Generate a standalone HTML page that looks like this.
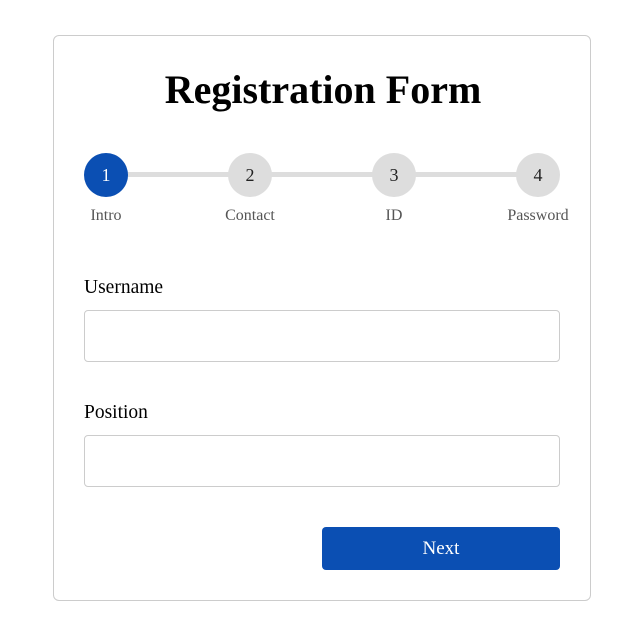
<!DOCTYPE html>
<html><head><style>
body{margin:0;background:#fff;font-family:"Liberation Serif",serif;}
.card{position:absolute;left:53px;top:35px;width:536px;height:564px;border:1px solid #ccc;border-radius:6px;}
h1{position:absolute;left:6px;width:634px;top:67px;margin:0;text-align:center;font-size:40px;font-weight:bold;line-height:46px;}
.line{position:absolute;left:106px;width:432px;top:172px;height:5px;background:#ddd;}
.c{position:absolute;top:153px;width:44px;height:44px;border-radius:50%;background:#ddd;text-align:center;line-height:44px;font-size:18px;color:#222;}
.l{position:absolute;top:207px;width:100px;text-align:center;font-size:16px;color:#555;}
.lab{position:absolute;left:84px;font-size:19.5px;}
.in{position:absolute;left:84px;width:474px;height:50px;border:1px solid #ccc;border-radius:4px;}
.btn{position:absolute;left:322px;top:527px;width:238px;height:43px;background:#0b4fb3;border-radius:4px;color:#fff;text-align:center;line-height:44px;font-size:19px;}
</style></head><body>
<div class="card"></div>
<h1>Registration Form</h1>
<div class="line"></div>
<div class="c" style="left:84px;background:#0b4fb3;color:#fff">1</div>
<div class="c" style="left:228px">2</div>
<div class="c" style="left:372px">3</div>
<div class="c" style="left:516px">4</div>
<div class="l" style="left:56px">Intro</div>
<div class="l" style="left:200px">Contact</div>
<div class="l" style="left:344px">ID</div>
<div class="l" style="left:488px">Password</div>
<div class="lab" style="top:277px">Username</div>
<div class="in" style="top:310px"></div>
<div class="lab" style="top:402px">Position</div>
<div class="in" style="top:435px"></div>
<div class="btn">Next</div>
</body></html>
